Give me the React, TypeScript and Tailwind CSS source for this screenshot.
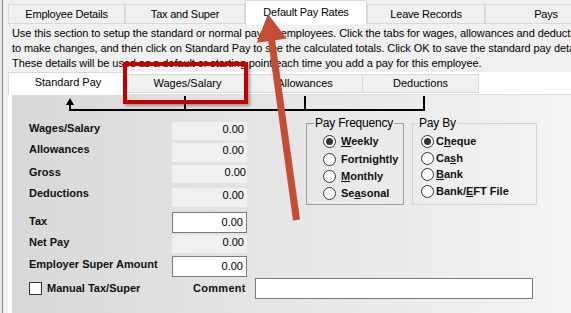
import React from "react";

const F = "font-['Liberation_Sans',Arial,sans-serif]";

function TopTab({ w, label, active }: { w: number; label: string; active?: boolean }) {
  return active ? (
    <div
      className="h-[25px] bg-white border-l border-r border-t border-[#d9d9d9] flex items-center justify-center pb-[1px] text-[11px] tracking-[-0.2px] text-black shrink-0"
      style={{ width: w }}
    >
      {label}
    </div>
  ) : (
    <div
      className="h-[20px] mt-[4px] bg-[#f0f0f0] border border-[#d9d9d9] flex items-center justify-center text-[11px] tracking-[-0.2px] text-black shrink-0"
      style={{ width: w }}
    >
      {label}
    </div>
  );
}

function InnerTab({ w, label, active }: { w: number; label: string; active?: boolean }) {
  return active ? (
    <div
      className="h-[24px] -mb-px bg-white border-l border-r border-t border-[#d9d9d9] flex items-center justify-center pb-[4px] text-[11px] text-black shrink-0"
      style={{ width: w }}
    >
      {label}
    </div>
  ) : (
    <div
      className="h-[19px] mt-[2px] bg-[#f0f0f0] border-t border-r border-b border-[#d9d9d9] flex items-center justify-center text-[11px] text-black shrink-0"
      style={{ width: w }}
    >
      {label}
    </div>
  );
}

function Radio({ checked }: { checked?: boolean }) {
  return (
    <span className="w-[13px] h-[13px] rounded-full border border-[#333333] bg-white flex items-center justify-center shrink-0">
      {checked && <span className="w-[7px] h-[7px] rounded-full bg-[#333333]" />}
    </span>
  );
}

function RadioRow({
  h,
  gap,
  checked,
  children,
}: {
  h: number;
  gap: number;
  checked?: boolean;
  children: React.ReactNode;
}) {
  return (
    <div className="flex items-center" style={{ height: h }}>
      <Radio checked={checked} />
      <span className="text-[11px] font-bold text-[#111] leading-[15px] whitespace-nowrap" style={{ marginLeft: gap }}>
        {children}
      </span>
    </div>
  );
}

function ReadRow({
  label,
  h,
  mt,
  lmt,
  pr = 3,
}: {
  label: string;
  h: number;
  mt: number;
  lmt: number;
  pr?: number;
}) {
  return (
    <div className="flex items-start" style={{ marginTop: mt, height: h }}>
      <div className="w-[143px] text-[11px] font-bold leading-[15px] text-[#111] whitespace-nowrap" style={{ marginTop: lmt }}>
        {label}
      </div>
      <div
        className="w-[75px] bg-[#f0f0f0] text-right text-[11px] leading-[15px] text-black"
        style={{ height: h, paddingRight: pr }}
      >
        0.00
      </div>
    </div>
  );
}

function InputRow({ label, h, mt, lmt }: { label: string; h: number; mt: number; lmt: number }) {
  return (
    <div className="flex items-start" style={{ marginTop: mt, height: h }}>
      <div className="w-[143px] text-[11px] font-bold leading-[15px] text-[#111] whitespace-nowrap" style={{ marginTop: lmt }}>
        {label}
      </div>
      <div
        className="w-[75px] bg-white border border-[#7a7a7a] flex items-center justify-end pr-[3px] text-[11px] leading-[15px] text-black"
        style={{ height: h }}
      >
        0.00
      </div>
    </div>
  );
}

export default function App() {
  return (
    <div className={`w-[571px] h-[313px] overflow-hidden relative flex bg-[#f0f0f0] ${F}`}>
      <div className="w-[2px] bg-[#e6e6e6] shrink-0" />
      <div className="w-[1px] bg-[#8a8a8a] shrink-0" />
      <div className="flex-1 flex flex-col min-w-0">
        {/* top tabs */}
        <div className="flex h-[25px] pl-[5px] items-start">
          <TopTab w={117} label="Employee Details" />
          <TopTab w={120} label="Tax and Super" />
          <TopTab w={122} label="Default Pay Rates" active />
          <TopTab w={118} label="Leave Records" />
          <TopTab w={122} label="Pays" />
        </div>

        {/* description */}
        <div className="h-[47px] pl-[9px] pt-[1px] text-[11px] leading-[15px] tracking-[-0.08px] text-black whitespace-nowrap">
          <div>
            Use this section to setup the standard or normal pay for employees. Click the tabs for wages, allowances and deductions
          </div>
          <div>
            to make changes, and then click on Standard Pay to see the calculated totals. Click OK to save the standard pay details.
          </div>
          <div>These details will be used as a default or starting point each time you add a pay for this employee.</div>
        </div>

        {/* inner tab control */}
        <div className="ml-[5px] flex-1 flex flex-col bg-white">
          <div className="flex h-[23px] border-b border-[#e0e0e0]">
            <InnerTab w={120} label="Standard Pay" active />
            <InnerTab w={120} label="Wages/Salary" />
            <InnerTab w={115} label="Allowances" />
            <InnerTab w={116} label="Deductions" />
          </div>
          <div className="flex-1 flex">
            <div className="w-[4px] shrink-0 bg-white" />
            <div className="flex-1 flex flex-col bg-linear-to-r from-[#d8d8d8] to-[#f4f4f4]">
              <svg width="559" height="17" className="block shrink-0">
                <rect x="57" y="14" width="355" height="2" fill="#000" />
                <rect x="57" y="8" width="2" height="7" fill="#000" />
                <polygon points="58,3 54,10 62,10" fill="#000" />
                <rect x="172" y="1" width="2" height="14" fill="#000" />
                <rect x="292" y="1" width="2" height="14" fill="#000" />
                <rect x="411" y="1" width="2" height="15" fill="#000" />
              </svg>

              <div className="flex">
                <div className="flex flex-col pl-[17px] pt-[10px]">
                  <ReadRow label="Wages/Salary" h={18} mt={0} lmt={-1} />
                  <ReadRow label="Allowances" h={19} mt={3} lmt={-1} />
                  <ReadRow label="Gross" h={18} mt={3} lmt={0} pr={1} />
                  <ReadRow label="Deductions" h={19} mt={5} lmt={-2} />
                  <InputRow label="Tax" h={21} mt={5} lmt={2} />
                  <ReadRow label="Net Pay" h={18} mt={2} lmt={0} />
                  <InputRow label="Employer Super Amount" h={21} mt={3} lmt={1} />
                </div>

                <div className="flex ml-[59px] mt-[4px] gap-[8px] items-start">
                  <fieldset className="w-[98px] border border-[#a0a0a0] px-0 pb-[2px] pt-[3px] m-0">
                    <legend className="ml-[7px] px-[1px] text-[12px] leading-[14px] text-black tracking-[-0.2px]">
                      Pay Frequency
                    </legend>
                    <div className="pl-[16px] flex flex-col">
                      <RadioRow h={17} gap={5} checked>
                        <span className="underline">W</span>eekly
                      </RadioRow>
                      <RadioRow h={18} gap={5}>
                        Fortnightly
                      </RadioRow>
                      <RadioRow h={16} gap={5}>
                        <span className="underline">M</span>onthly
                      </RadioRow>
                      <RadioRow h={18} gap={5}>
                        Se<span className="underline">a</span>sonal
                      </RadioRow>
                    </div>
                  </fieldset>
                  <fieldset className="w-[125px] border border-[#d4d4d4] px-0 pb-[5px] pt-[3px] m-0">
                    <legend className="ml-[5px] px-[1px] text-[12px] leading-[14px] text-black tracking-[-0.2px]">
                      Pay By
                    </legend>
                    <div className="pl-[8px] flex flex-col">
                      <RadioRow h={17} gap={2} checked>
                        C<span className="underline">h</span>eque
                      </RadioRow>
                      <RadioRow h={16} gap={2}>
                        Ca<span className="underline">s</span>h
                      </RadioRow>
                      <RadioRow h={17} gap={2}>
                        <span className="underline">B</span>ank
                      </RadioRow>
                      <RadioRow h={16} gap={2}>
                        Bank/<span className="underline">E</span>FT File
                      </RadioRow>
                    </div>
                  </fieldset>
                </div>
              </div>

              <div className="flex items-center pl-[17px] mt-[1px] h-[21px]">
                <div className="w-[164px] flex items-center">
                  <span className="w-[13px] h-[13px] border border-[#333333] bg-white shrink-0" />
                  <span className="ml-[5px] text-[11px] font-bold leading-[15px] text-[#111] whitespace-nowrap">
                    Manual Tax/Super
                  </span>
                </div>
                <div className="w-[62px] text-[11px] font-bold leading-[15px] text-[#111] tracking-[0.3px]">Comment</div>
                <div className="w-[278px] h-[21px] bg-white border border-[#7a7a7a]" />
              </div>
            </div>
          </div>
        </div>
      </div>

      {/* red highlight rectangle */}
      <div className="absolute left-[123px] top-[62px] w-[125px] h-[42px] border-[4px] border-[#c00000] shadow-[2px_2px_3px_rgba(0,0,0,0.35)] pointer-events-none" />

      {/* red pointer arrow */}
      <svg className="absolute left-0 top-0 pointer-events-none" width="571" height="313">
        <polygon
          points="268,14 286.6,38.6 275.2,40.2 300,219.5 293,220.5 268.2,41.2 256.8,42.8"
          fill="#c24f35"
        />
      </svg>
    </div>
  );
}
